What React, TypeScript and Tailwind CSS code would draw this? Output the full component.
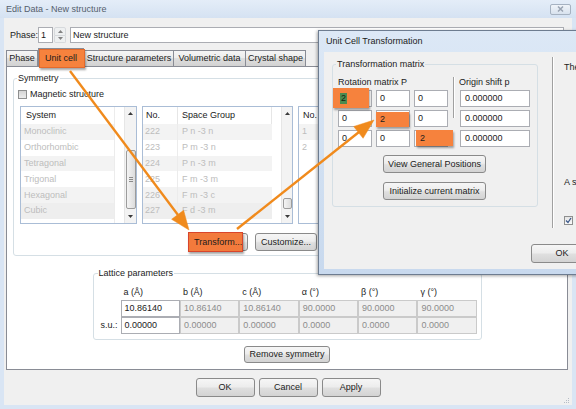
import React from "react";

const btn =
  "flex items-center justify-center border border-[#8a8a8a] rounded-[3px] bg-[linear-gradient(#f6f6f6,#ededed_45%,#dfdfdf_55%,#d3d3d3)] text-[#1b1b1b] whitespace-nowrap";

function Button({ className, children }: { className: string; children: React.ReactNode }) {
  return <div className={`${btn} ${className}`}>{children}</div>;
}

function Field({ className, children }: { className: string; children?: React.ReactNode }) {
  return (
    <div className={`flex items-center bg-white border border-[#abadb3] text-[#1b1b1b] whitespace-nowrap ${className}`}>
      {children}
    </div>
  );
}

function DField({ className, children }: { className: string; children?: React.ReactNode }) {
  return (
    <div className={`flex items-center bg-[#f0f0f0] border border-[#cacaca] text-[#8c8c8c] whitespace-nowrap ${className}`}>
      {children}
    </div>
  );
}

function UpArrow() {
  return (
    <svg width="5" height="3" viewBox="0 0 5 3">
      <path d="M0 3 L2.5 0 L5 3Z" fill="#3a3a3a" />
    </svg>
  );
}
function DownArrow() {
  return (
    <svg width="5" height="3" viewBox="0 0 5 3">
      <path d="M0 0 L2.5 3 L5 0Z" fill="#3a3a3a" />
    </svg>
  );
}

function Tab({ className, children }: { className: string; children: React.ReactNode }) {
  return (
    <div
      className={`h-[16px] flex items-center justify-center border border-b-0 border-[#898c95] bg-[linear-gradient(#f5f5f5,#ececec_50%,#dedede_50%,#d2d2d2)] whitespace-nowrap ${className}`}
    >
      {children}
    </div>
  );
}

const rowBg = ["bg-[#f3f3f3]", "bg-white", "bg-[#f3f3f3]", "bg-white", "bg-[#f3f3f3]", "bg-[#eeeeee]"];

const systems = ["Monoclinic", "Orthorhombic", "Tetragonal", "Trigonal", "Hexagonal", "Cubic"];
const groups: [string, string][] = [
  ["222", "P n -3 n"],
  ["223", "P m -3 n"],
  ["224", "P n -3 m"],
  ["225", "F m -3 m"],
  ["226", "F m -3 c"],
  ["227", "F d -3 m"],
];

const latticeHead = ["a (Å)", "b (Å)", "c (Å)", "α (°)", "β (°)", "γ (°)"];
const latticeVal = ["10.86140", "10.86140", "10.86140", "90.0000", "90.0000", "90.0000"];
const latticeSu = ["0.00000", "0.00000", "0.00000", "0.0000", "0.0000", "0.0000"];

// diagonal cells are covered by the annotation highlights (which carry the "2")
const matrix = [
  ["", "0", "0"],
  ["0", "", "0"],
  ["0", "0", ""],
];

export default function App() {
  return (
    <div className="relative w-[576px] h-[409px] overflow-hidden bg-[#d9e5f4] text-[9px] leading-none text-[#1b1b1b] font-['Liberation_Sans',Arial,sans-serif]">
      {/* main title bar */}
      <div className="h-[18px] flex items-center pl-[6px] pr-[5px] bg-[linear-gradient(#e4edf8,#d5e2f2)]">
        <span className="text-[#55606d]">Edit Data - New structure</span>
        <div className="ml-auto w-[21px] h-[11px] rounded-[2px] border border-[#a6b2c1] bg-[linear-gradient(#f0f4f9,#d8e2ee)] flex items-center justify-center">
          <svg width="7" height="6" viewBox="0 0 7 6">
            <path d="M1 0.5 L6 5.5 M6 0.5 L1 5.5" stroke="#9aa4b2" strokeWidth="1.5" />
          </svg>
        </div>
      </div>

      {/* main client */}
      <div className="mx-[4px] h-[387px] bg-[#f0f0f0] flex flex-col">
        {/* phase row */}
        <div className="mt-[9px] h-[16px] flex items-center pl-[6px] pr-[8px]">
          <span className="w-[28px]">Phase:</span>
          <Field className="w-[15px] h-[16px] pl-[2px]">1</Field>
          <div className="ml-[1px] w-[12px] h-[16px] flex flex-col">
            <div className="flex-1 border border-[#c6cad0] rounded-t-[2px] bg-[#eef0f3] flex items-center justify-center opacity-60">
              <UpArrow />
            </div>
            <div className="flex-1 border border-t-0 border-[#c6cad0] rounded-b-[2px] bg-[#eef0f3] flex items-center justify-center opacity-60">
              <DownArrow />
            </div>
          </div>
          <Field className="ml-[4px] flex-1 h-[16px] pl-[2px]">New structure</Field>
        </div>

        {/* tabs */}
        <div className="mt-[5px] h-[18px] flex items-end pl-[2px]">
          <Tab className="w-[32px]">Phase</Tab>
          <div className="w-[46px] h-[18px] bg-white border border-b-0 border-[#898c95]" />
          <Tab className="w-[90px]">Structure parameters</Tab>
          <Tab className="w-[72px] border-l-0">Volumetric data</Tab>
          <Tab className="w-[60px] border-l-0">Crystal shape</Tab>
        </div>

        {/* tab panel */}
        <div className="ml-[2px] mr-[4px] h-[305px] bg-white border border-[#898c95] flex flex-col">
          {/* Symmetry group */}
          <div className="relative mt-[11px] mx-[6px] h-[178px] border border-[#d5dfe5] rounded-[3px] flex flex-col">
            <span className="absolute -top-[5px] left-[3px] px-[1px] bg-white">Symmetry</span>
            <div className="mt-[11px] ml-[4px] h-[9px] flex items-center">
              <div className="w-[9px] h-[9px] border border-[#8e8f8f] bg-[linear-gradient(#d4d4d4,#ececec)]" />
              <span className="ml-[3px]">Magnetic structure</span>
            </div>
            <div className="mt-[7px] ml-[6px] mr-[5px] h-[118px] flex gap-[5px]">
              {/* list 1 */}
              <div className="w-[117px] h-full border border-[#aabdd6] flex bg-white">
                <div className="w-[94px] flex flex-col border-r border-[#ececec]">
                  <div className="h-[17px] flex items-center pl-[5px]">System</div>
                  {systems.map((s, i) => (
                    <div key={s} className={`h-[15.8px] flex items-center pl-[3px] text-[#bdbdbd] ${rowBg[i]}`}>
                      {s}
                    </div>
                  ))}
                </div>
                <div className="w-[9px]" />
                <div className="w-[12px] h-full bg-[#f3f3f3] border-l border-[#e6e6e6] flex flex-col items-center">
                  <div className="h-[14px] flex items-center justify-center">
                    <UpArrow />
                  </div>
                  <div className="h-[29px]" />
                  <div className="w-[10px] h-[60px] border border-[#9c9c9c] rounded-[2px] bg-[linear-gradient(90deg,#f4f4f4,#dcdcdc)] flex flex-col items-center justify-center gap-[1px]">
                    <div className="w-[4px] h-px bg-[#8a8a8a]" />
                    <div className="w-[4px] h-px bg-[#8a8a8a]" />
                    <div className="w-[4px] h-px bg-[#8a8a8a]" />
                  </div>
                  <div className="flex-1" />
                  <div className="h-[14px] flex items-center justify-center">
                    <DownArrow />
                  </div>
                </div>
              </div>
              {/* list 2 */}
              <div className="w-[151px] h-full border border-[#aabdd6] flex bg-white">
                <div className="w-[129px] flex flex-col">
                  <div className="h-[17px] flex items-center">
                    <div className="w-[35px] h-full flex items-center pl-[3px] border-r border-[#e6e6e6]">No.</div>
                    <div className="flex-1 h-full flex items-center pl-[4px] border-r border-[#e6e6e6]">Space Group</div>
                  </div>
                  {groups.map(([n, g], i) => (
                    <div key={n} className={`h-[15.8px] flex items-center text-[#bdbdbd] ${rowBg[i]}`}>
                      <div className="w-[35px] h-full flex items-center pl-[2px] border-r border-[#ececec]">{n}</div>
                      <div className="flex-1 h-full flex items-center pl-[4px]">{g}</div>
                    </div>
                  ))}
                </div>
                <div className="w-[9px]" />
                <div className="w-[11px] h-full bg-[#f3f3f3] border-l border-[#e6e6e6] flex flex-col items-center">
                  <div className="h-[14px] flex items-center justify-center">
                    <UpArrow />
                  </div>
                  <div className="h-[78px]" />
                  <div className="w-[9px] h-[11px] border border-[#9c9c9c] rounded-[2px] bg-[linear-gradient(90deg,#f4f4f4,#dcdcdc)]" />
                  <div className="flex-1" />
                  <div className="h-[14px] flex items-center justify-center">
                    <DownArrow />
                  </div>
                </div>
              </div>
              {/* list 3 */}
              <div className="flex-1 h-full border border-[#aabdd6] flex flex-col bg-white">
                <div className="h-[17px] flex items-center">
                  <div className="w-[40px] h-full flex items-center pl-[4px] border-r border-[#e6e6e6]">No.</div>
                </div>
                <div className="h-[15.8px] flex items-center pl-[3px] text-[#bdbdbd] bg-[#f3f3f3]">1</div>
                <div className="h-[15.8px] flex items-center pl-[3px] text-[#bdbdbd]">2</div>
              </div>
            </div>
            <div className="mt-[9px] ml-[174px] h-[18px] flex gap-[7px]">
              <Button className="w-[60px] h-[18px]">{""}</Button>
              <Button className="w-[62px] h-[18px]">Customize...</Button>
            </div>
          </div>

          {/* Lattice parameters */}
          <div className="relative mt-[17px] self-center w-[389px] h-[67px] border border-[#d5dfe5] rounded-[3px]">
            <span className="absolute -top-[5px] left-[4px] px-[1px] bg-white">Lattice parameters</span>
            <div className="mt-[11px] grid grid-cols-[27px_repeat(6,59.4px)]">
              <div className="h-[15px]" />
              {latticeHead.map((h) => (
                <div key={h} className="h-[15px] flex items-center pl-[3px]">
                  {h}
                </div>
              ))}
              <div className="h-[17px]" />
              {latticeVal.map((v, i) =>
                i === 0 ? (
                  <Field key={i} className="h-[17px] pl-[3px]">
                    {v}
                  </Field>
                ) : (
                  <DField key={i} className="h-[17px] pl-[3px]">
                    {v}
                  </DField>
                )
              )}
              <div className="h-[17px] flex items-center justify-end pr-[3px]">s.u.:</div>
              {latticeSu.map((v, i) =>
                i === 0 ? (
                  <Field key={i} className="h-[17px] pl-[3px]">
                    {v}
                  </Field>
                ) : (
                  <DField key={i} className="h-[17px] pl-[3px]">
                    {v}
                  </DField>
                )
              )}
            </div>
          </div>

          <Button className="mt-[6px] self-center w-[86px] h-[17px]">Remove symmetry</Button>
        </div>

        {/* bottom buttons */}
        <div className="mt-[8px] flex justify-center gap-[4px]">
          <Button className="w-[59px] h-[19px]">OK</Button>
          <Button className="w-[59px] h-[19px]">Cancel</Button>
          <Button className="w-[59px] h-[19px]">Apply</Button>
        </div>
        <div className="flex-1 flex justify-end items-end pr-[2px] pb-[1px]">
          <svg width="7" height="7" viewBox="0 0 7 7">
            <g fill="#b5bcc6">
              <rect x="5" y="1" width="1" height="1" />
              <rect x="3" y="3" width="1" height="1" />
              <rect x="5" y="3" width="1" height="1" />
              <rect x="1" y="5" width="1" height="1" />
              <rect x="3" y="5" width="1" height="1" />
              <rect x="5" y="5" width="1" height="1" />
            </g>
          </svg>
        </div>
      </div>

      {/* Unit Cell Transformation dialog */}
      <div className="absolute left-[318px] top-[30px] w-[300px] h-[245px] border border-[#6d7c90] bg-[linear-gradient(#dce8f6,#c8d9ee)] shadow-[-1px_1px_3px_rgba(0,0,0,0.35)] flex flex-col">
        <div className="h-[21px] flex items-center pl-[7px] text-[#1b1b1b]">Unit Cell Transformation</div>
        <div className="ml-[5px] h-[217px] bg-[#f0f0f0] flex flex-col">
          <div className="flex items-start">
            <div className="relative mt-[12px] ml-[8px] w-[206px] h-[143px] border border-[#d5dfe5] rounded-[3px] flex flex-col">
              <span className="absolute -top-[5px] left-[3px] px-[1px] bg-[#f0f0f0]">Transformation matrix</span>
              <div className="mt-[11px] ml-[5px] flex">
                <div className="w-[110px] flex flex-col">
                  <div className="h-[12px] flex items-center">Rotation matrix P</div>
                  <div className="mt-[2px] flex flex-col gap-[3px]">
                    {matrix.map((r, ri) => (
                      <div key={ri} className="flex gap-[4px]">
                        {r.map((c, ci) => (
                          <Field key={ci} className="w-[34px] h-[17px] pl-[3px]">
                            {c}
                          </Field>
                        ))}
                      </div>
                    ))}
                  </div>
                </div>
                <div className="w-[12px] flex justify-center">
                  <div className="mt-[1px] w-[2px] h-[41px] border-l border-[#a0a0a0] border-r border-r-white" />
                </div>
                <div className="w-[70px] flex flex-col">
                  <div className="h-[12px] flex items-center -ml-[1px]">Origin shift p</div>
                  <div className="mt-[2px] flex flex-col gap-[3px]">
                    {[0, 1, 2].map((k) => (
                      <Field key={k} className="w-[70px] h-[17px] pl-[4px]">
                        0.000000
                      </Field>
                    ))}
                  </div>
                </div>
              </div>
              <Button className="ml-[50px] mt-[8px] w-[103px] h-[18px]">View General Positions</Button>
              <Button className="ml-[50px] mt-[9px] w-[103px] h-[18px]">Initialize current matrix</Button>
            </div>
            <div className="mt-[5px] ml-[14px] w-[2px] h-[171px] border-l border-[#a0a0a0] border-r border-r-white" />
            <div className="ml-[10px] mt-[11px] flex flex-col whitespace-nowrap">
              <div className="h-[9px] flex items-center">The</div>
              <div className="mt-[106px] h-[9px] flex items-center">A s</div>
              <div className="mt-[29px] w-[9px] h-[9px] border border-[#8e8f8f] bg-[linear-gradient(#e4e4e4,#fafafa)] flex items-center justify-center">
                <svg width="7" height="7" viewBox="0 0 7 7">
                  <path d="M1 3.5 L3 5.5 L6 1" stroke="#3d5a8c" strokeWidth="1.3" fill="none" />
                </svg>
              </div>
            </div>
          </div>
          <Button className="mt-[16px] ml-[207px] w-[62px] h-[19px]">OK</Button>
        </div>
      </div>

      {/* annotation highlights */}
      <div className="absolute left-[39px] top-[49px] w-[46px] h-[19px] bg-[#f6823d] border border-[#e46a2c] shadow-[1px_2px_2px_rgba(0,0,0,0.35)] flex items-center pl-[5px] whitespace-nowrap">
        Unit cell
      </div>
      <div className="absolute left-[188px] top-[232px] w-[55px] h-[20px] bg-[#f27a3c] border border-[#d8452c] shadow-[1px_2px_2px_rgba(0,0,0,0.35)] flex items-center pl-[5px] whitespace-nowrap">
        Transform...
      </div>
      <div className="absolute left-[333px] top-[88px] w-[36px] h-[20px] bg-[#f6823d] shadow-[1px_2px_2px_rgba(0,0,0,0.35)] flex items-center pl-[7px]">
        <span className="bg-[#4b8a4f] text-[#13230f] px-[1px] py-[1px]">2</span>
      </div>
      <div className="absolute left-[376px] top-[112px] w-[33px] h-[15px] bg-[#f6823d] shadow-[1px_2px_2px_rgba(0,0,0,0.35)] flex items-center pl-[4px]">
        2
      </div>
      <div className="absolute left-[416px] top-[130px] w-[37px] h-[16px] bg-[#f6823d] shadow-[1px_2px_2px_rgba(0,0,0,0.35)] flex items-center pl-[4px]">
        2
      </div>

      {/* arrows */}
      <svg className="absolute left-0 top-0 pointer-events-none" width="576" height="409" viewBox="0 0 576 409">
        <g fill="#f08a1c" stroke="#f08a1c">
          <line x1="70" y1="71" x2="178" y2="215" strokeWidth="2.4" />
          <polygon points="189,230 171.6,219.3 183.6,210.3" strokeWidth="0.5" />
          <line x1="237" y1="229" x2="359" y2="132" strokeWidth="2.4" />
          <polygon points="374,120 363.1,138.3 353.7,126.5" strokeWidth="0.5" />
        </g>
      </svg>
    </div>
  );
}
